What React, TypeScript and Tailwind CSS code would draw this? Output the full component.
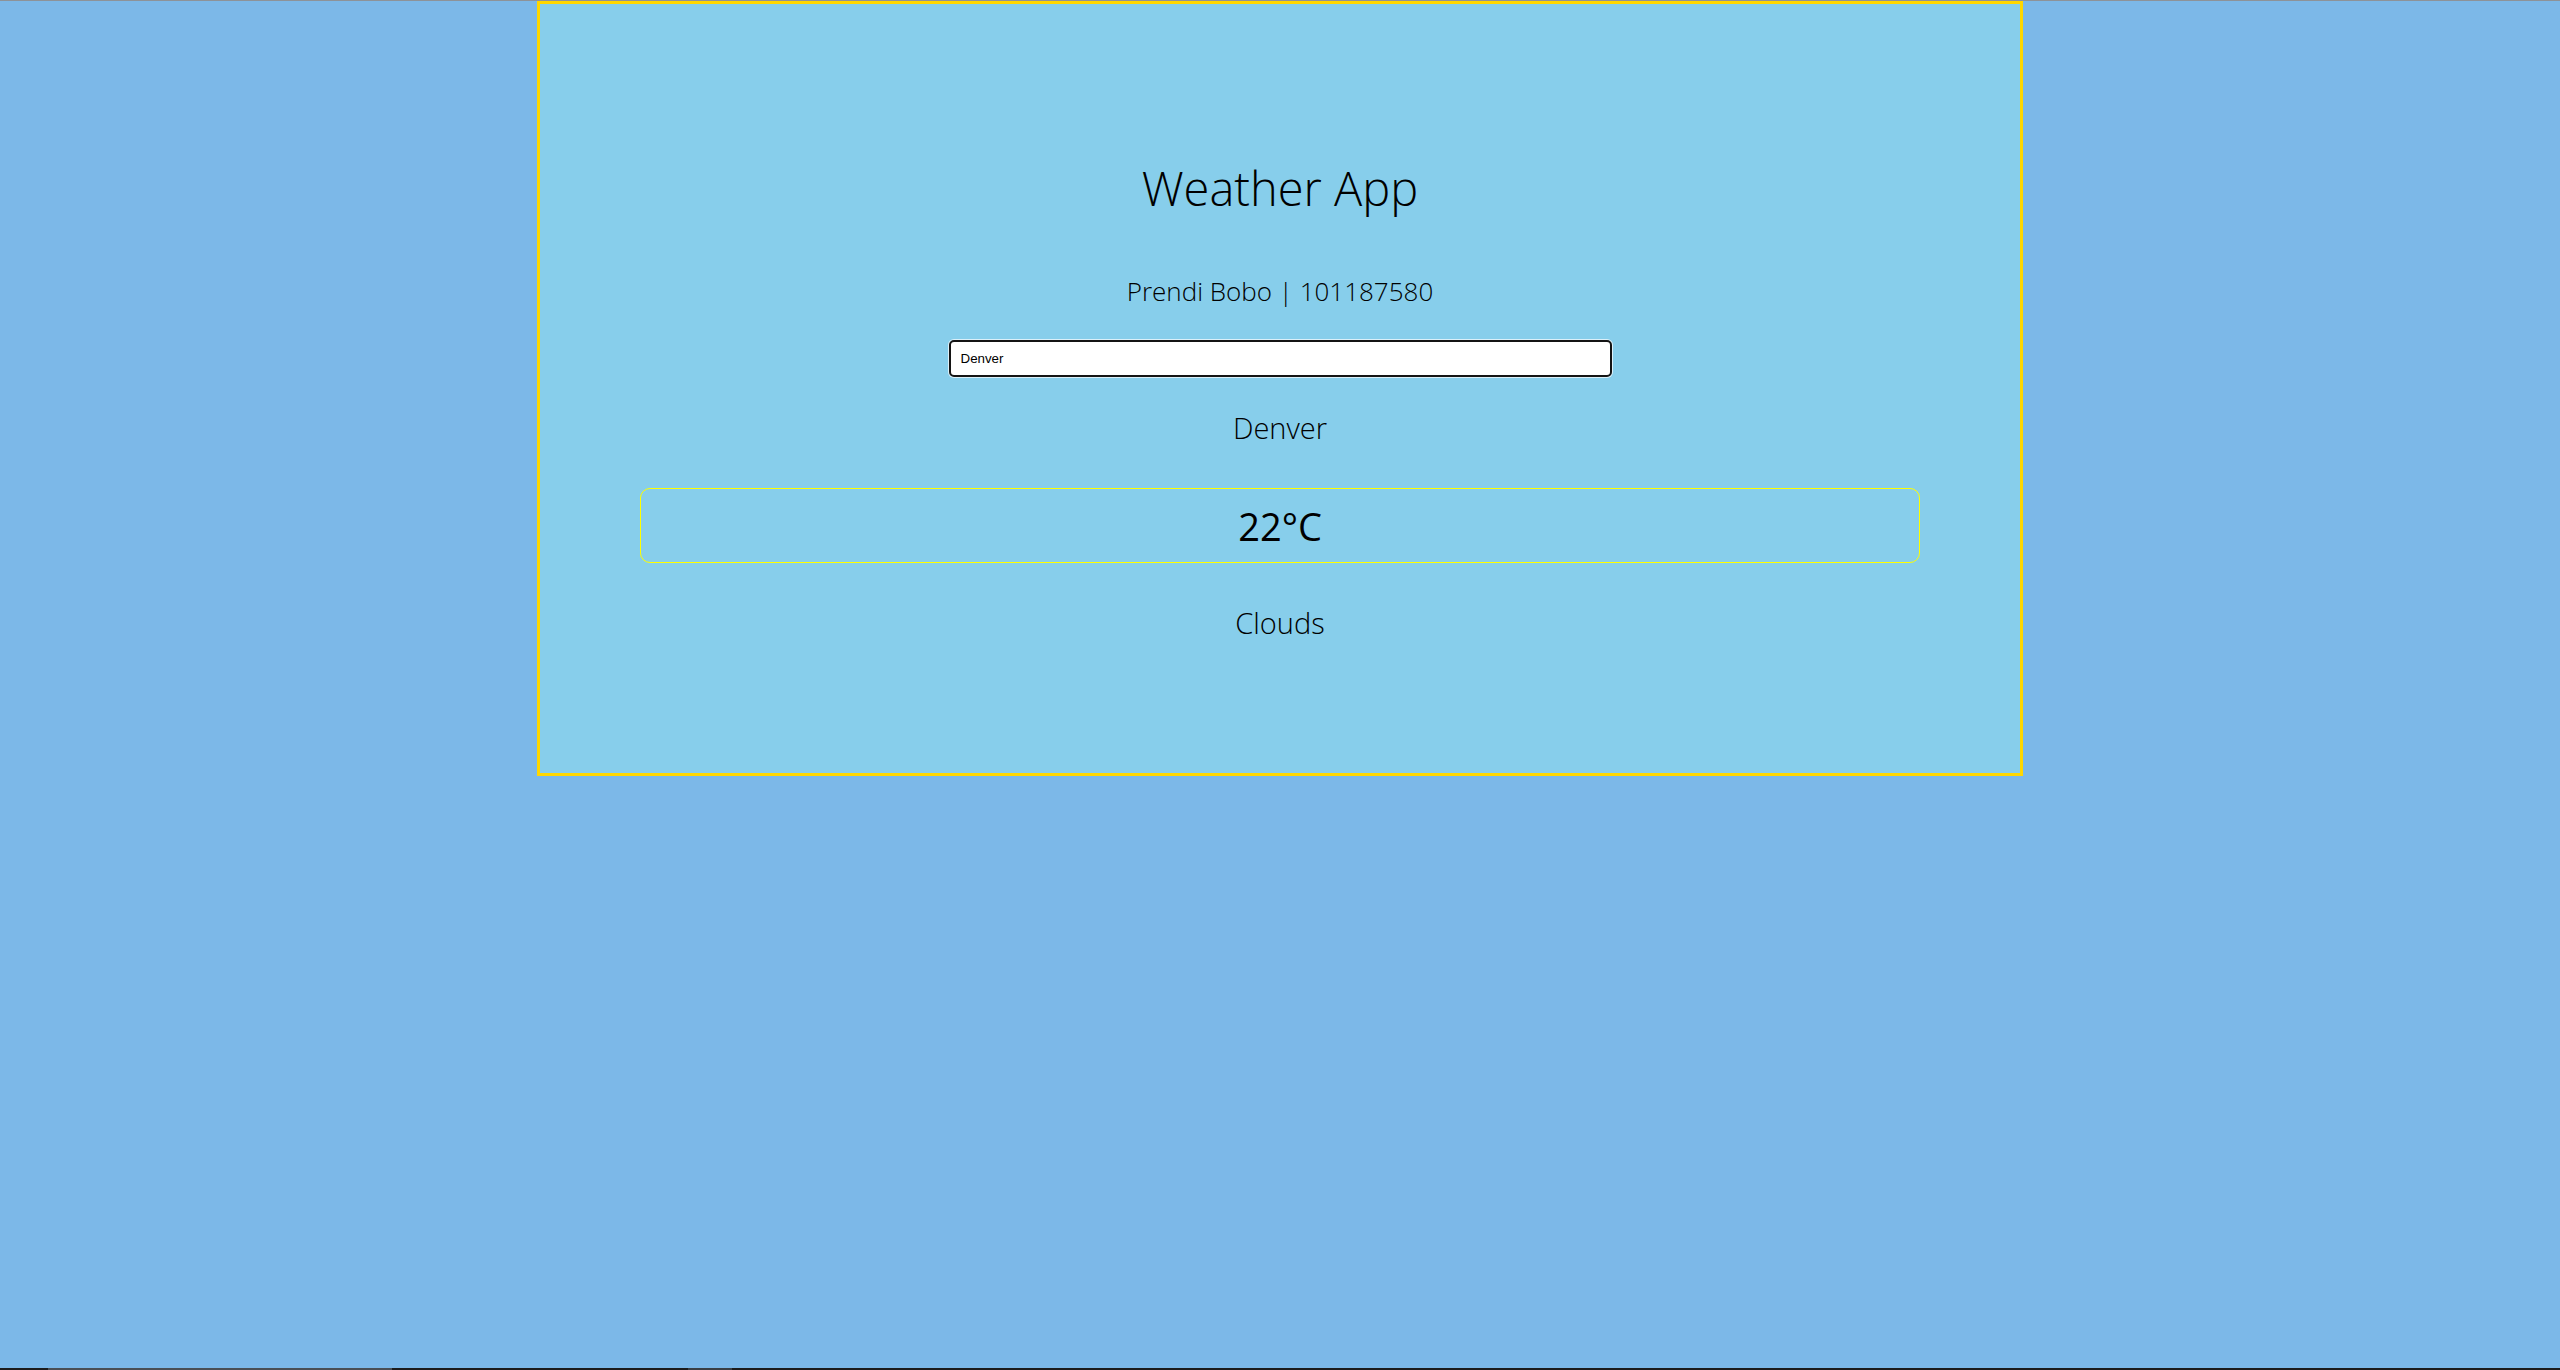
import { useState } from 'react';

export default function App() {
  const [city, setCity] = useState('Denver');

  const weather = { city: 'Denver', temp: 22, main: 'Clouds' };

  return (
    <div className="min-h-[1370px] flex flex-col bg-[#7cb8e8] font-['Open_Sans',sans-serif] text-black">
      <div className="h-px bg-[#8d9298]" />
      <div className="mx-auto w-[1486px] h-[775px] border-[3px] border-[#ffd700] bg-[#87ceeb] flex flex-col items-center pt-[161px]">
        <h1 className="text-[47px] leading-none font-light">Weather App</h1>
        <p className="mt-[66px] text-[26px] leading-none font-light">Prendi Bobo | 101187580</p>
        <input
          autoFocus
          value={city}
          onChange={(e) => setCity(e.target.value)}
          className="mt-[36px] w-[663px] h-[37px] bg-white border-2 border-[#141414] rounded-[5px] pl-[10px] text-[13.33px] font-['Liberation_Sans',sans-serif] text-black outline-none shadow-[0_0_0_1px_rgba(255,255,255,0.7)]"
        />
        <h2 className="mt-[36px] text-[29px] leading-none font-light">{weather.city}</h2>
        <div className="mt-[46px] w-[1280px] h-[75px] border border-[#ffff00] rounded-[10px] flex items-center justify-center">
          <span className="text-[38px] leading-none font-normal">{weather.temp}°C</span>
        </div>
        <p className="mt-[45px] text-[29px] leading-none font-light">{weather.main}</p>
      </div>
      <div className="flex-1" />
      <div className="h-[2px] bg-[#1c1c1c] flex">
        <div className="ml-[48px] w-[344px] bg-[#4a4f55]" />
        <div className="ml-[296px] w-[44px] bg-[#3a3f45]" />
      </div>
    </div>
  );
}
